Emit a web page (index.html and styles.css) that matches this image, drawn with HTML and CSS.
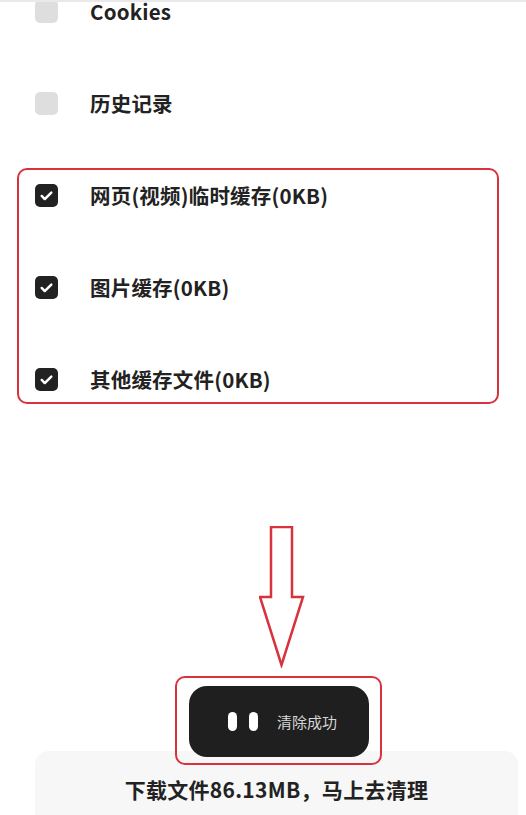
FILE: index.html
```html
<!DOCTYPE html>
<html lang="zh-CN">
<head>
    <meta charset="UTF-8">
    <meta name="viewport" content="width=device-width, initial-scale=1.0">
    <title>清理缓存</title>
    <link rel="stylesheet" href="styles.css">
</head>
<body>
    <div class="list">
        <div class="row">
            <span class="check"></span>
            <span class="label">Cookies</span>
        </div>
        <div class="row">
            <span class="check"></span>
            <span class="label">历史记录</span>
        </div>
        <div class="marked">
            <div class="row">
                <span class="check on"><svg viewBox="0 0 24 24"><path d="M7 12.5l3.2 3.2L17 9"/></svg></span>
                <span class="label">网页(视频)临时缓存(0KB)</span>
            </div>
            <div class="row">
                <span class="check on"><svg viewBox="0 0 24 24"><path d="M7 12.5l3.2 3.2L17 9"/></svg></span>
                <span class="label">图片缓存(0KB)</span>
            </div>
            <div class="row">
                <span class="check on"><svg viewBox="0 0 24 24"><path d="M7 12.5l3.2 3.2L17 9"/></svg></span>
                <span class="label">其他缓存文件(0KB)</span>
            </div>
        </div>
    </div>

    <svg class="arrow" width="46" height="142" viewBox="0 0 46 142">
        <path d="M12 1 H33 V71 H44 L22.5 139 L1 71 H12 Z"/>
    </svg>

    <div class="toast-mark">
        <div class="toast">
            <span class="dot"></span>
            <span class="dot"></span>
            <span class="toast-text">清除成功</span>
        </div>
    </div>

    <div class="card">
        <p>下载文件86.13MB，马上去清理</p>
    </div>
</body>
</html>
```

FILE: styles.css
```css
body {
    margin: 0;
    border-top: 2px solid #e9e9e9;
    background-color: #fff;
    font-family: "Noto Sans CJK SC", "Noto Sans", sans-serif;
    color: #222;
    overflow: hidden;
    height: 813px;
}

.list {
    margin-top: -37px;
}

.row {
    height: 92px;
    display: flex;
    align-items: center;
    padding-left: 35px;
}

.check {
    width: 23px;
    height: 23px;
    border-radius: 5px;
    background-color: #dedede;
    display: flex;
    align-items: center;
    justify-content: center;
    flex-shrink: 0;
}

.check.on {
    background-color: #222;
}

.check svg {
    width: 23px;
    height: 23px;
    fill: none;
    stroke: #fff;
    stroke-width: 2.6;
    stroke-linecap: round;
    stroke-linejoin: round;
}

.label {
    margin-left: 32px;
    font-size: 20.5px;
    font-weight: 700;
    letter-spacing: 0.2px;
}

/* red annotation frame around the three checked rows */
.marked {
    position: relative;
}

.marked::after {
    content: "";
    position: absolute;
    top: 19px;
    bottom: 21px;
    left: 17px;
    width: 482px;
    box-sizing: border-box;
    border: 2px solid #d8323c;
    border-radius: 10px;
}

.arrow {
    display: block;
    margin: 101px 0 0 259px;
}

.arrow path {
    fill: none;
    stroke: #d8323c;
    stroke-width: 2.5;
    stroke-linejoin: miter;
}

.toast-mark {
    position: relative;
    z-index: 1;
    width: 207px;
    height: 89px;
    box-sizing: border-box;
    margin: 8px 0 0 175px;
    padding: 8px 0 0 12px;
    border: 2px solid #d8323c;
    border-radius: 10px;
}

.toast {
    width: 180px;
    height: 71px;
    border-radius: 18px;
    background-color: #1f1f1f;
    display: flex;
    align-items: center;
    padding-left: 39px;
    box-sizing: border-box;
}

.dot {
    width: 9px;
    height: 19px;
    border-radius: 5px;
    background-color: #fff;
    margin-right: 12px;
}

.toast-text {
    margin-left: 7px;
    font-size: 15px;
    color: #d6d6d6;
}

.card {
    margin: -14px 8px 0 35px;
    height: 90px;
    background-color: #f7f7f7;
    border-radius: 14px;
    text-align: center;
}

.card p {
    margin: 0;
    padding-top: 24px;
    font-size: 21px;
    line-height: 28px;
    font-weight: 700;
    color: #222;
    letter-spacing: 0.3px;
}
```
